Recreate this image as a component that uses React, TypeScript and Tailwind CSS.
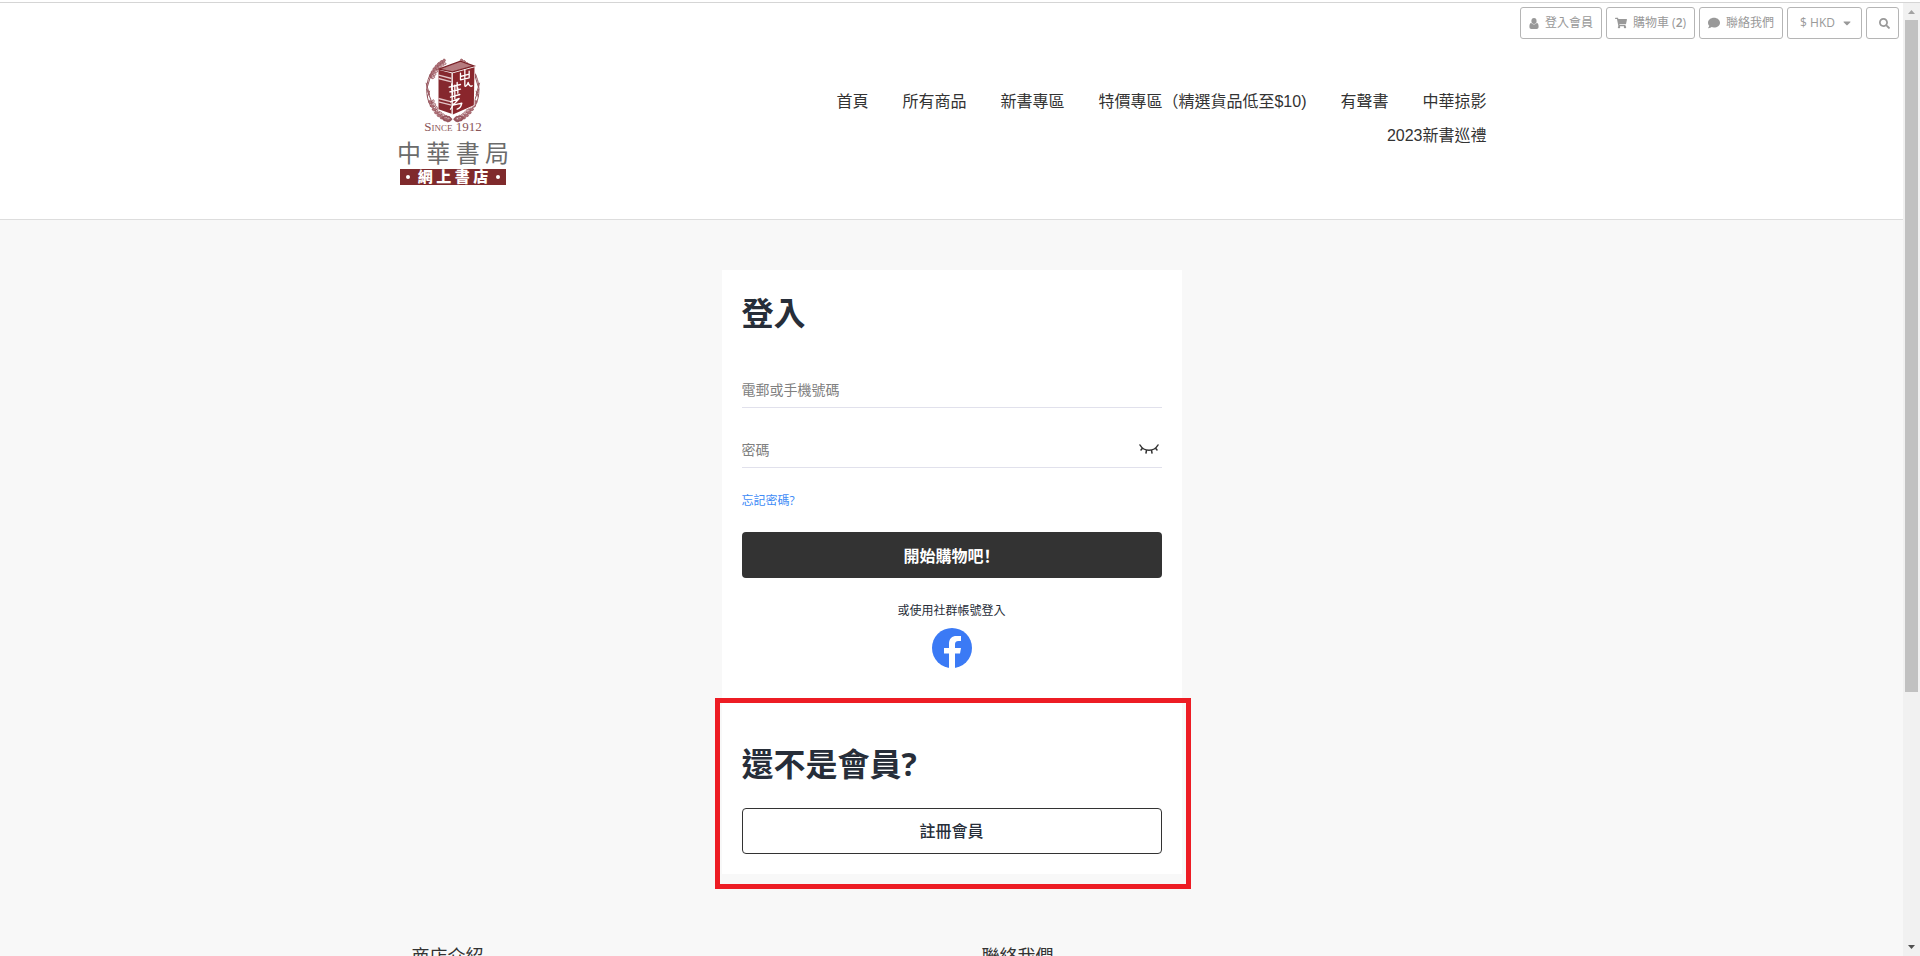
import { useState } from 'react'
import { FaCaretDown, FaComment, FaSearch, FaShoppingCart } from 'react-icons/fa'

const NAV_LINKS = ['首頁', '所有商品', '新書專區', '特價專區（精選貨品低至$10)', '有聲書', '中華掠影', '2023新書巡禮']

// angles (degrees, clockwise from the top) of the wreath leaves, mirrored on both sides
const LEAVES = [20, 27, 34, 41, 48, 55, 62, 112, 120, 128, 136, 144, 152, 160, 168]

const toolClass = 'flex h-8 items-center rounded-[3px] border border-[#b5b5b5] text-xs text-[#999]'

function Wreath() {
  return (
    <g>
      {[1, -1].map((side) => (
        <g key={side} transform={`translate(97 106) scale(${side} 1)`} fill="none" stroke="#96545c" strokeLinecap="round">
          {LEAVES.map((deg) => {
            const a = (deg * Math.PI) / 180
            const x = Math.sin(a) * 70
            const y = -Math.cos(a) * 90
            return (
              <g key={deg} transform={`translate(${x} ${y}) rotate(${deg})`}>
                <ellipse cx="0" cy="-4" rx="6" ry="4" fill="#b0737a" strokeWidth="2" transform="rotate(35)" />
                <ellipse cx="0" cy="6" rx="5" ry="3" fill="#e4c8cb" strokeWidth="2" transform="rotate(-30)" />
              </g>
            )
          })}
          <path d="M64-52C82-28 84 20 66 50" strokeWidth="3" />
          <path d="M66-44L76-10M80-20L70 14M78-2L62 40M70 4L76 20" strokeWidth="3" />
          <path d="M4 88c8-12 22-10 28-4c-8 12-22 12-28 4" strokeWidth="5" />
        </g>
      ))}
    </g>
  )
}

function Logo() {
  return (
    <svg viewBox="0 0 112 130" className="h-[130px] w-28 overflow-visible" role="img" aria-label="中華書局網上書店">
      <g transform="translate(23.5 -4.5) scale(0.3333)">
        <Wreath />
        {/* book */}
        <path d="M53 44L120 18L164 34L162 154L96 182L53 168z" fill="#fff" />
        <path d="M55 44L120 20L160 34L96 52z" fill="#b57b7f" stroke="#7b2228" strokeWidth="4" />
        <path d="M54 46L93 56V178L54 164z" fill="#85282e" />
        <path d="M97 56L162 38L160 152L97 180z" fill="#8a262c" />
        <path d="M54 62L93 72M54 72L93 82M54 132L93 142M54 142L93 152" stroke="#e2c4c6" strokeWidth="4" />
        <g fill="none" stroke="#fff" strokeWidth="4" strokeLinecap="round" strokeLinejoin="round">
          <path d="M120 56v20l26-6V50M120 66l26-7M133 46v46c0 8 8 0 10-8c2 8 8 14 12 10" />
          <path d="M86 98l34-8M94 88v18M110 84v18M88 112l32-8M96 106v14M112 100v16M90 128l28-8M103 92v40" />
          <path d="M90 142l26-10l-18 20l26-6c-2 10-6 16-14 18M98 148c-2 8-4 12-8 16" />
        </g>
      </g>
      <text
        x="56"
        y="72"
        textAnchor="middle"
        fontFamily="Liberation Serif, serif"
        fontSize="13"
        fill="#8a5558"
        style={{ fontVariant: 'small-caps' }}
      >
        Since 1912
      </text>
      <text x="56" y="103" textAnchor="middle" fontFamily="Noto Sans CJK TC, sans-serif" fontSize="24" fill="#6b6b6b">
        中 華 書 局
      </text>
      <path d="M3 110h106v16H3z" fill="#7f2a2c" />
      <text x="56" y="123" textAnchor="middle" fontFamily="Noto Sans CJK TC, sans-serif" fontSize="15" fontWeight="900" fill="#fff">
        網 上 書 店
      </text>
      <circle cx="11" cy="118" r="2" fill="#fff" />
      <circle cx="101" cy="118" r="2" fill="#fff" />
    </svg>
  )
}

function UserIcon() {
  return (
    <svg viewBox="0 0 10 11" className="mr-1.5 h-[11px] w-2.5" fill="currentColor">
      <ellipse cx="5" cy="3" rx="2.600" ry="3" />
      <path d="M2.200 4.800C1 5.200.4 6.600.4 8.800C.4 10.200 1.200 11 2.300 11h5.400c1.100 0 1.900-.8 1.900-2.200c0-2.200-.6-3.600-1.800-4C6.500 7 3.500 7 2.200 4.800z" />
    </svg>
  )
}

function ClosedEye() {
  return (
    <svg viewBox="0 0 20 10" className="h-[10px] w-5" fill="none" stroke="#333" strokeWidth="1.5" strokeLinecap="round">
      <path d="M1 1c4 7 14 7 18 0M3.500 4L2 6M7.500 6.300L7 9M12.500 6.300L13 9M16.500 4L18 6" />
    </svg>
  )
}

function FacebookIcon() {
  return (
    <svg viewBox="0 0 40 40" className="size-10">
      <circle cx="20" cy="20" r="20" fill="#3b7af5" />
      <path d="M17 40V25.500h-5V20h5v-4c0-5.500 3-8 7.500-8H29v5h-2.500c-2.700 0-3.500 1.300-3.500 3.500V20h6l-1 5.500h-5V40z" fill="#fff" />
    </svg>
  )
}

function Toolbar() {
  return (
    <div className="flex justify-end gap-1 pt-1 pr-1">
      <a href="#login" className={`${toolClass} px-2`}>
        <UserIcon />
        登入會員
      </a>
      <a href="#cart" className={`${toolClass} px-2`}>
        <FaShoppingCart className="mr-1.5 size-3" />
        <span>
          購物車 (<b className="font-semibold">2</b>)
        </span>
      </a>
      <a href="#contact" className={`${toolClass} px-2`}>
        <FaComment className="mr-1.5 size-3" />
        聯絡我們
      </a>
      <button className={`${toolClass} pr-2 pl-3`}>
        $ HKD
        <FaCaretDown className="ml-1.5 size-3" />
      </button>
      <button className={`${toolClass} pr-2 pl-3`} aria-label="搜尋">
        <FaSearch className="size-[11px]" />
      </button>
    </div>
  )
}

function Scrollbar() {
  return (
    <div className="flex w-[17px] shrink-0 flex-col items-center bg-[#f1f1f1]" aria-hidden="true">
      <svg viewBox="0 0 17 17" className="size-[17px] shrink-0">
        <path d="M5 11h7L8.500 7z" fill="#a3a3a3" />
      </svg>
      <div className="w-[13px] grow-[672] bg-[#c1c1c1]" />
      <div className="grow-[247]" />
      <svg viewBox="0 0 17 17" className="size-[17px] shrink-0">
        <path d="M5 6h7l-3.500 4z" fill="#505050" />
      </svg>
    </div>
  )
}

export default function App() {
  const [showPassword, setShowPassword] = useState(false)

  return (
    <div className="flex h-screen flex-col overflow-hidden bg-white pt-0.5 font-['Open_Sans','Noto_Sans_CJK_TC',sans-serif] text-[#333]">
      <div className="flex min-h-0 flex-1 border-t border-[#d5d5d5]">
        <div className="min-w-0 flex-1 overflow-hidden bg-[#f8f8f8]">
          <header className="border-b border-[#ddd] bg-white pb-[30px]">
            <Toolbar />
            <div className="mx-auto flex max-w-[1140px] items-start justify-between px-[15px]">
              <a href="#home" className="mt-5">
                <Logo />
              </a>
              <nav className="mt-[46px] w-[720px] font-['Liberation_Sans','Noto_Sans_CJK_TC',sans-serif]">
                <ul className="flex flex-wrap justify-end gap-x-[34px] pr-5">
                  {NAV_LINKS.map((label) => (
                    <li key={label}>
                      <a href="#nav" className="block leading-[34px]">
                        {label}
                      </a>
                    </li>
                  ))}
                </ul>
              </nav>
            </div>
          </header>

          <main className="mx-auto mt-[50px] w-full max-w-[460px] bg-white p-5 text-[#272e39]">
            <h1 className="text-[32px] leading-[46px] font-bold">登入</h1>
            <form onSubmit={(e) => e.preventDefault()}>
              <div className="mt-[35px] border-b border-[#e1e1ec]">
                <input
                  type="text"
                  aria-label="電郵或手機號碼"
                  placeholder="電郵或手機號碼"
                  className="h-9 w-full text-sm outline-none placeholder:text-[#808080]"
                />
              </div>
              <div className="mt-[23px] flex items-center border-b border-[#e1e1ec] pr-[3px]">
                <input
                  type={showPassword ? 'text' : 'password'}
                  aria-label="密碼"
                  placeholder="密碼"
                  className="h-9 min-w-0 flex-1 text-sm outline-none placeholder:text-[#808080]"
                />
                <button type="button" aria-label="顯示密碼" onClick={() => setShowPassword(!showPassword)}>
                  <ClosedEye />
                </button>
              </div>
              <a href="#forgot" className="mt-[25px] block text-xs leading-4 text-[#408bf6]">
                忘記密碼?
              </a>
              <button className="mt-[23px] h-[46px] w-full rounded bg-[#333] font-bold text-white">
                開始購物吧<span className="font-['Noto_Sans_CJK_SC',sans-serif]">！</span>
              </button>
            </form>
            <p className="mt-[25px] text-center text-xs leading-4">或使用社群帳號登入</p>
            <div className="mt-[9px] flex justify-center">
              <button aria-label="Facebook">
                <FacebookIcon />
              </button>
            </div>

            <section className="relative pt-[72px]">
              {/* highlight frame around the sign-up block */}
              <div className="pointer-events-none absolute -right-[29px] -bottom-[35px] -left-[27px] top-[30px] border-[5px] border-[#ed1c24]" />
              <h2 className="text-[32px] leading-12 font-bold">還不是會員?</h2>
              <button className="mt-5 h-[46px] w-full rounded border border-[#333] font-medium">註冊會員</button>
            </section>
          </main>

          <footer className="mx-auto mt-[68px] grid max-w-[1140px] grid-cols-2 text-lg">
            <h3 className="px-[30px]">商店介紹</h3>
            <h3 className="px-[30px]">聯絡我們</h3>
          </footer>
        </div>
        <Scrollbar />
      </div>
    </div>
  )
}
